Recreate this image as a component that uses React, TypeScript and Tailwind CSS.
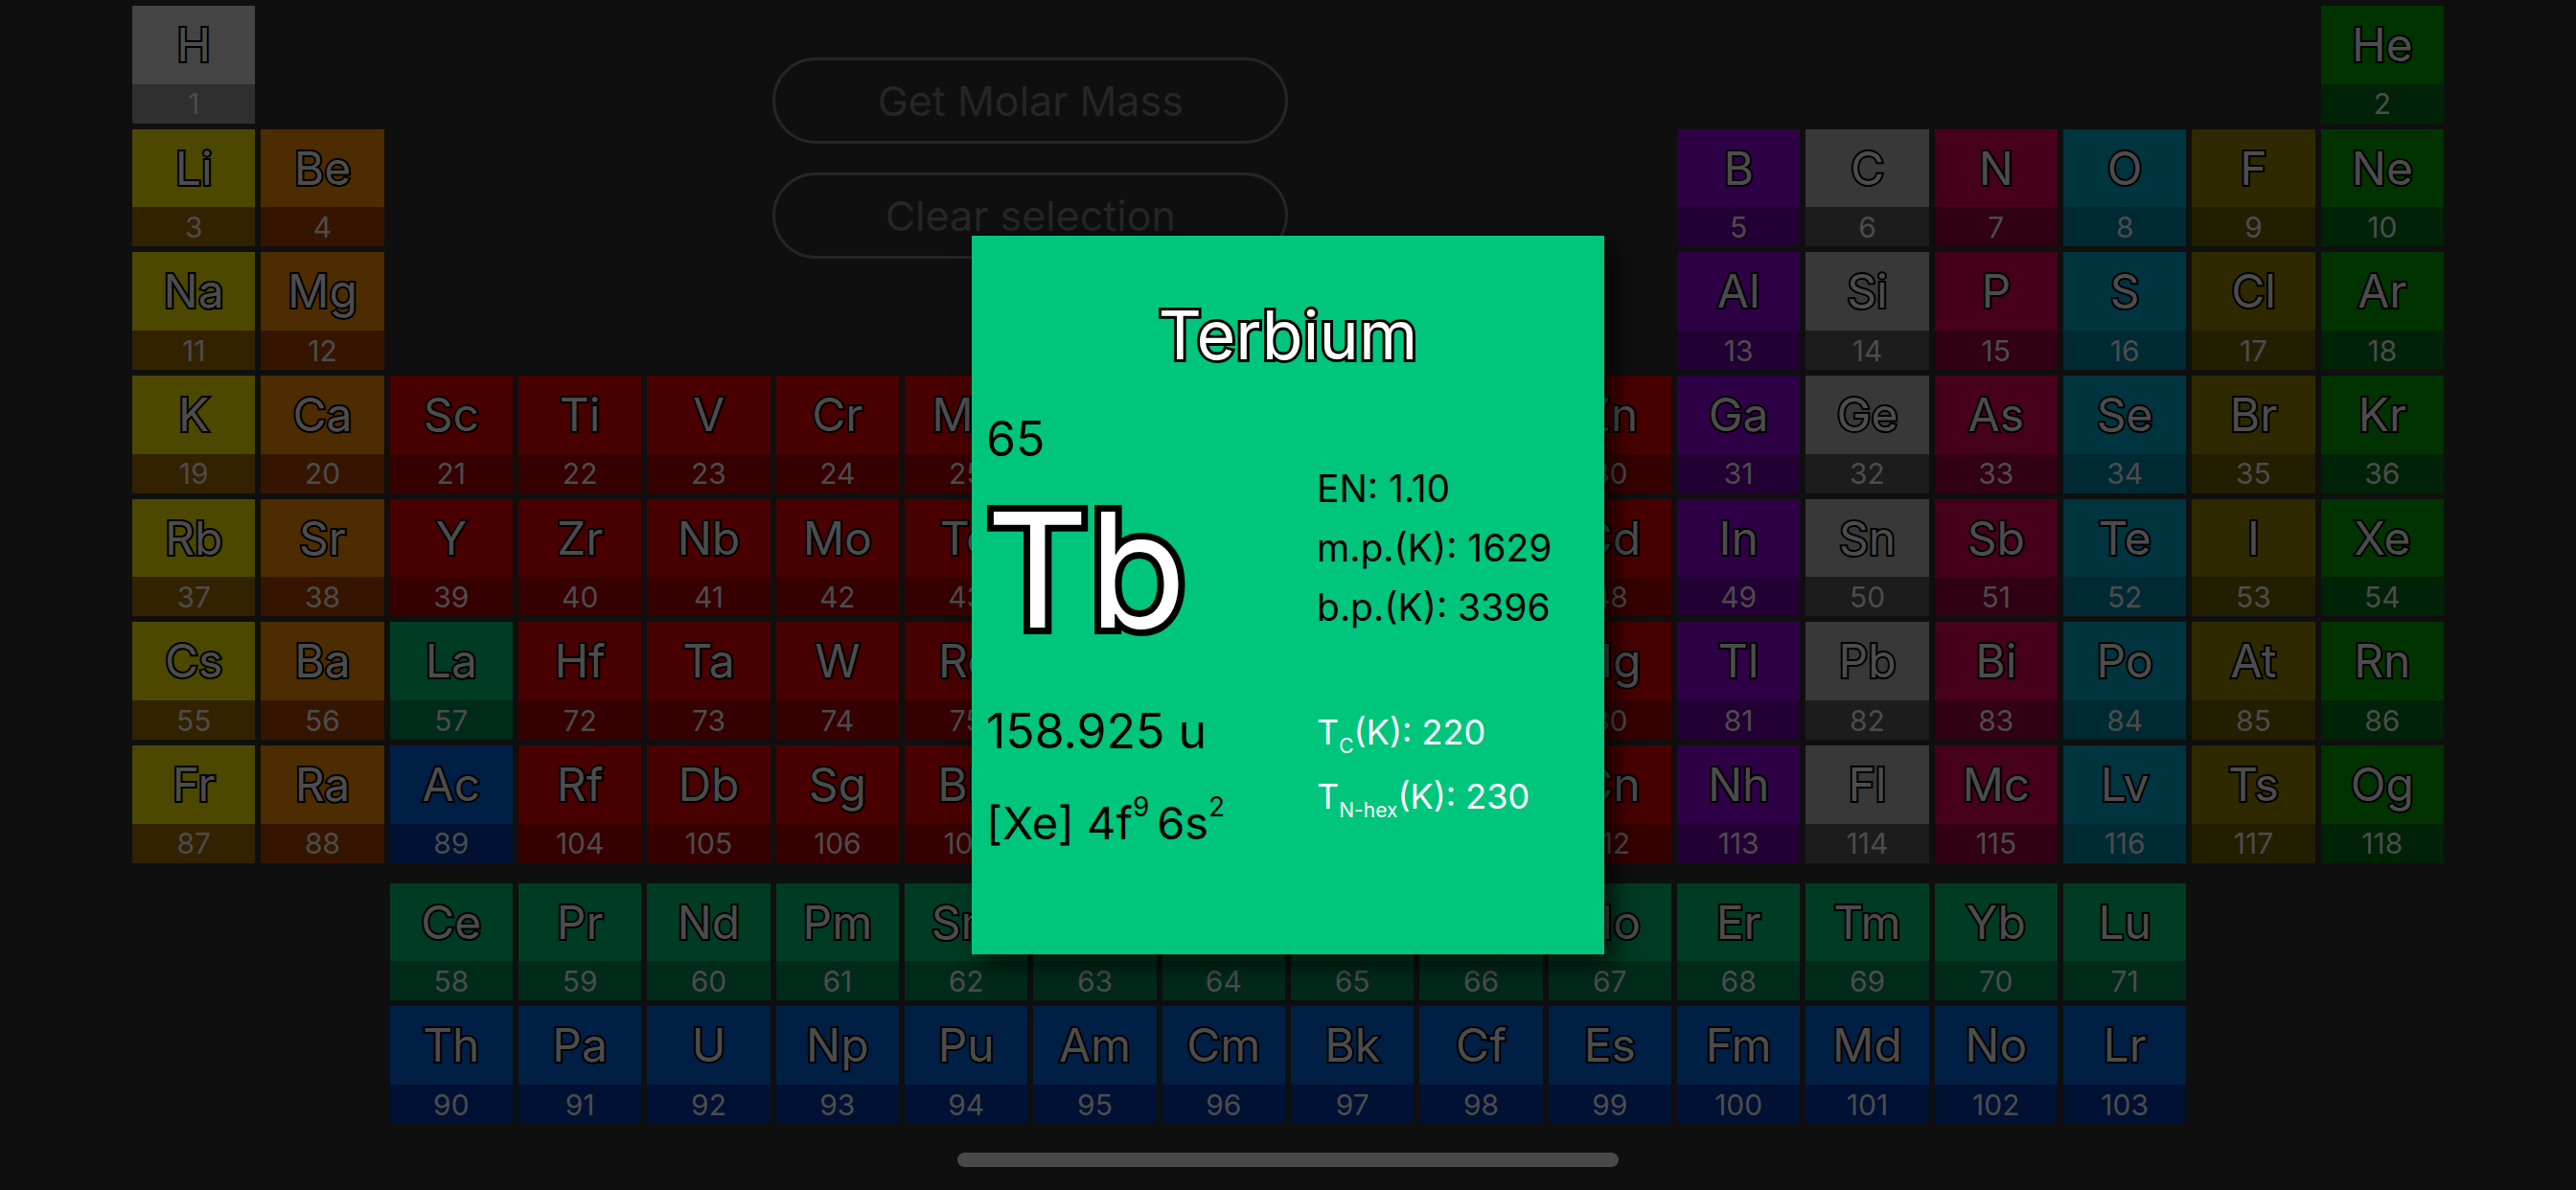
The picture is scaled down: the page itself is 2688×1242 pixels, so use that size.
type Kind =
  | "hydrogen"
  | "alkali"
  | "alkaline"
  | "transition"
  | "lanthanide"
  | "actinide"
  | "boron"
  | "carbon"
  | "nitrogen"
  | "oxygen"
  | "halogen"
  | "noble";

const TOP: Record<Kind, string> = {
  hydrogen: "bg-[#444444]",
  alkali: "bg-[#4c4800]",
  alkaline: "bg-[#4c2c00]",
  transition: "bg-[#480000]",
  lanthanide: "bg-[#003b24]",
  actinide: "bg-[#001f45]",
  boron: "bg-[#2e0046]",
  carbon: "bg-[#383838]",
  nitrogen: "bg-[#46001c]",
  oxygen: "bg-[#00343f]",
  halogen: "bg-[#2e2900]",
  noble: "bg-[#003300]",
};

const BOTTOM: Record<Kind, string> = {
  hydrogen: "bg-[#2f2f2f]",
  alkali: "bg-[#332200]",
  alkaline: "bg-[#361500]",
  transition: "bg-[#360000]",
  lanthanide: "bg-[#002a1a]",
  actinide: "bg-[#001133]",
  boron: "bg-[#230033]",
  carbon: "bg-[#1c1c1c]",
  nitrogen: "bg-[#310014]",
  oxygen: "bg-[#002a33]",
  halogen: "bg-[#221e00]",
  noble: "bg-[#002206]",
};

const SYMBOLS =
  "H He Li Be B C N O F Ne Na Mg Al Si P S Cl Ar K Ca Sc Ti V Cr Mn Fe Co Ni Cu Zn Ga Ge As Se Br Kr Rb Sr Y Zr Nb Mo Tc Ru Rh Pd Ag Cd In Sn Sb Te I Xe Cs Ba La Ce Pr Nd Pm Sm Eu Gd Tb Dy Ho Er Tm Yb Lu Hf Ta W Re Os Ir Pt Au Hg Tl Pb Bi Po At Rn Fr Ra Ac Th Pa U Np Pu Am Cm Bk Cf Es Fm Md No Lr Rf Db Sg Bh Hs Mt Ds Rg Cn Nh Fl Mc Lv Ts Og".split(
    " ",
  );

const range = (from: number, to: number) =>
  Array.from({ length: to - from + 1 }, (_, i) => from + i);

// Each period lists [first grid column, first atomic number, last atomic number] runs.
const PERIODS: { row: number; runs: [number, number, number][] }[] = [
  { row: 1, runs: [[1, 1, 1], [18, 2, 2]] },
  { row: 2, runs: [[1, 3, 4], [13, 5, 10]] },
  { row: 3, runs: [[1, 11, 12], [13, 13, 18]] },
  { row: 4, runs: [[1, 19, 36]] },
  { row: 5, runs: [[1, 37, 54]] },
  { row: 6, runs: [[1, 55, 57], [4, 72, 86]] },
  { row: 7, runs: [[1, 87, 89], [4, 104, 118]] },
  { row: 9, runs: [[3, 58, 71]] },
  { row: 10, runs: [[3, 90, 103]] },
];

const P_BLOCK: Kind[] = ["boron", "carbon", "nitrogen", "oxygen", "halogen", "noble"];

function kindOf(n: number, column: number): Kind {
  if (n === 1) return "hydrogen";
  if (n >= 57 && n <= 71) return "lanthanide";
  if (n >= 89 && n <= 103) return "actinide";
  if (column === 1) return "alkali";
  if (column === 2) return "alkaline";
  if (column < 13) return "transition";
  return P_BLOCK[column - 13];
}

const CELLS = PERIODS.flatMap(({ row, runs }) =>
  runs.flatMap(([start, from, to]) =>
    range(from, to).map((n, i) => ({
      n,
      row,
      column: start + i,
      symbol: SYMBOLS[n - 1],
      kind: kindOf(n, start + i),
    })),
  ),
);

function ElementCell({ cell }: { cell: (typeof CELLS)[number] }) {
  return (
    <button
      type="button"
      className="grid min-h-0 grid-rows-[2fr_1fr] text-[#4c4c4c]"
      style={{ gridRow: cell.row, gridColumn: cell.column }}
    >
      <span
        className={`flex items-center justify-center text-[48px] leading-none [-webkit-text-stroke:4px_#000] [paint-order:stroke_fill] ${TOP[cell.kind]}`}
      >
        {cell.symbol}
      </span>
      <span className={`flex items-center justify-center text-[30px] leading-none ${BOTTOM[cell.kind]}`}>
        {cell.n}
      </span>
    </button>
  );
}

function PillButton({ children }: { children: string }) {
  return (
    <button
      type="button"
      className="h-[90px] w-[538px] rounded-full border-3 border-[#262626] text-[43px] leading-none text-[#262626]"
    >
      {children}
    </button>
  );
}

function ElementCard() {
  return (
    <section
      role="dialog"
      aria-labelledby="element-name"
      className="h-[750px] w-[660px] bg-[#00c57c] pt-[59px] text-black shadow-[10px_10px_24px_rgba(0,0,0,0.7)]"
    >
      <h1
        id="element-name"
        className="text-center text-[70px] leading-[90px] text-white [-webkit-text-stroke:6px_#000] [paint-order:stroke_fill]"
      >
        Terbium
      </h1>
      <div className="flex pl-[15px]">
        <div className="w-[345px] pt-[33px] text-[50px] leading-[60px] whitespace-nowrap">
          <p>65</p>
          <p className="text-[166px] leading-[214px] text-white [-webkit-text-stroke:14px_#000] [paint-order:stroke_fill]">
            Tb
          </p>
          <p className="mt-[31px]">158.925 u</p>
          <p className="mt-[35px] text-[47px]">
            [Xe] 4f<sup className="static align-[24px] text-[28px] leading-none">9 </sup>6s
            <sup className="static align-[24px] text-[28px] leading-none">2</sup>
          </p>
        </div>
        <div className="pt-[84px] text-[39px] leading-[62px] whitespace-nowrap">
          <p>EN: 1.10</p>
          <p>m.p.(K): 1629</p>
          <p>b.p.(K): 3396</p>
          <div className="mt-[66px] text-[36px] leading-[67px] text-white">
            <p>
              T<sub className="static align-[-9px] text-[21px] leading-none">C</sub>(K): 220
            </p>
            <p>
              T<sub className="static align-[-9px] text-[21px] leading-none">N-hex</sub>(K): 230
            </p>
          </div>
        </div>
      </div>
    </section>
  );
}

export default function App() {
  return (
    <div className="relative flex h-screen flex-col bg-[#0f0f0f] font-['Inter',sans-serif]">
      <main className="grid min-h-0 flex-1 grid-cols-[repeat(18,minmax(0,1fr))] grid-rows-[repeat(7,minmax(0,1fr))_9px_repeat(2,minmax(0,1fr))] gap-[6px] px-[138px] pt-[6px]">
        {CELLS.map((cell) => (
          <ElementCell key={cell.n} cell={cell} />
        ))}
        <div className="col-[3/13] row-[1/4] flex flex-col items-center gap-[30px] pt-[54px]">
          <PillButton>Get Molar Mass</PillButton>
          <PillButton>Clear selection</PillButton>
        </div>
      </main>
      <footer className="flex h-[69px] items-start justify-center pt-[30px]">
        <div className="h-[15px] w-[690px] rounded-full bg-[#494949]" />
      </footer>
      <div className="absolute inset-0 flex items-center justify-center">
        <ElementCard />
      </div>
    </div>
  );
}
